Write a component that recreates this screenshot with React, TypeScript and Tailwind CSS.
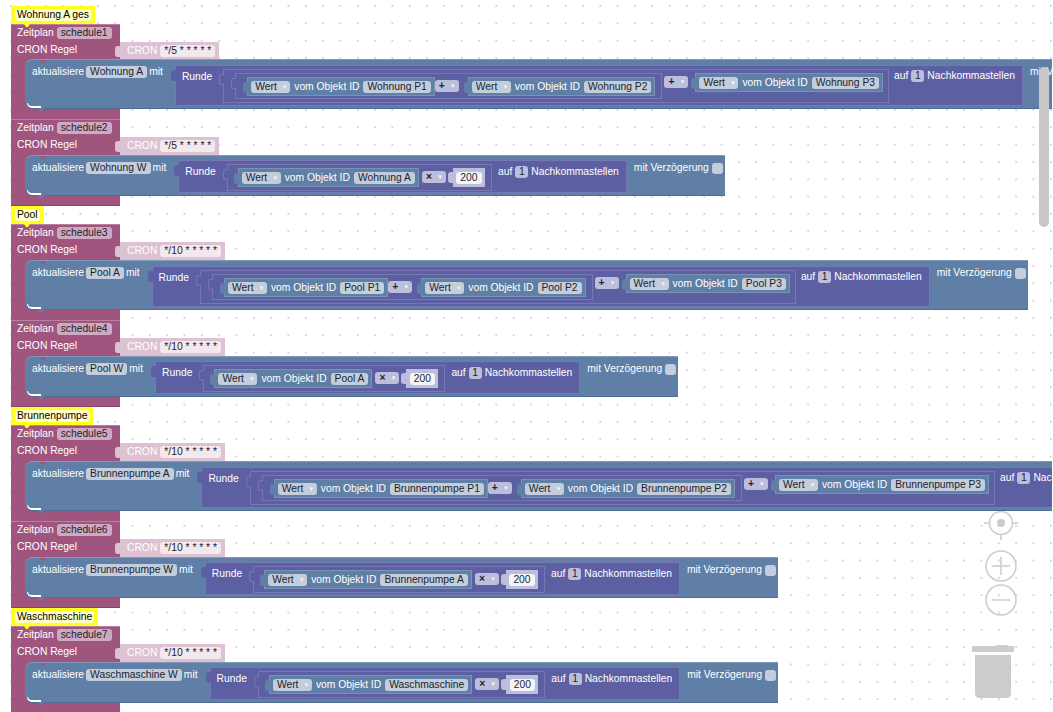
import type { ReactNode } from "react";

const schedules = [
  { comment: "Wohnung A ges", name: "schedule1", cron: "*/5 * * * * *", target: "Wohnung A", ids: ["Wohnung P1", "Wohnung P2", "Wohnung P3"] },
  { name: "schedule2", cron: "*/5 * * * * *", target: "Wohnung W", id: "Wohnung A" },
  { comment: "Pool", name: "schedule3", cron: "*/10 * * * * *", target: "Pool A", ids: ["Pool P1", "Pool P2", "Pool P3"] },
  { name: "schedule4", cron: "*/10 * * * * *", target: "Pool W", id: "Pool A" },
  { comment: "Brunnenpumpe", name: "schedule5", cron: "*/10 * * * * *", target: "Brunnenpumpe A", ids: ["Brunnenpumpe P1", "Brunnenpumpe P2", "Brunnenpumpe P3"] },
  { name: "schedule6", cron: "*/10 * * * * *", target: "Brunnenpumpe W", id: "Brunnenpumpe A" },
  { comment: "Waschmaschine", name: "schedule7", cron: "*/10 * * * * *", target: "Waschmaschine W", id: "Waschmaschine" },
];

function Field({ children, className }: { children: ReactNode; className: string }) {
  return (
    <span className={`flex h-[12px] shrink-0 items-center whitespace-nowrap rounded-[3px] px-[4px] text-[#20242c] ${className}`}>
      {children}
    </span>
  );
}

function Drop({ label, className }: { label: string; className: string }) {
  return (
    <Field className={className}>
      {label}
      <span className="ml-[5px] text-[6px] text-[#f2f4f8]">▼</span>
    </Field>
  );
}

function Tab({ className }: { className: string }) {
  return <span className={`absolute -left-[5px] top-[4px] h-[11px] w-[5px] rounded-l-[3px] ${className}`} />;
}

function Wert({ id }: { id: string }) {
  return (
    <div className="relative flex h-[19px] shrink-0 items-center gap-[4px] border border-[#7893b4] bg-[#5f7fa6] pl-[3px] pr-[3px] text-white">
      <Tab className="bg-[#5f7fa6]" />
      <Drop label="Wert" className="w-[39px] justify-between bg-[#c3cddc]" />
      <span className="whitespace-nowrap">vom Objekt ID</span>
      <Field className="bg-[#c3cddc]">{id}</Field>
    </div>
  );
}

function Plus({ label }: { label: string }) {
  return <Drop label={label} className="w-[24px] justify-between bg-[#bdbedb] font-bold" />;
}

function Sum({ ids }: { ids: string[] }) {
  return (
    <div className="relative ml-[11px] mt-[3px] flex h-[34px] shrink-0 items-start border border-[#7678b3] bg-[#5d5fa3] pl-[11px] pr-[5px] pt-[3px]">
      <Tab className="border border-r-0 border-[#7678b3] bg-[#5d5fa3]" />
      <div className="relative flex h-[26px] shrink-0 items-start border border-[#7678b3] bg-[#5d5fa3] pl-[11px] pr-[6px] pt-[3px]">
        <Tab className="border border-r-0 border-[#7678b3] bg-[#5d5fa3]" />
        <Wert id={ids[0]} />
        <div className="mr-[9px] mt-[3px]">
          <Plus label="+" />
        </div>
        <Wert id={ids[1]} />
      </div>
      <div className="ml-[2px] mr-[7px] mt-[3px]">
        <Plus label="+" />
      </div>
      <Wert id={ids[2]} />
    </div>
  );
}

function Product({ id }: { id: string }) {
  return (
    <div className="relative ml-[11px] mt-[3px] flex h-[27px] shrink-0 items-start border border-[#7678b3] bg-[#5d5fa3] pl-[10px] pr-[6px] pt-[3px]">
      <Tab className="border border-r-0 border-[#7678b3] bg-[#5d5fa3]" />
      <Wert id={id} />
      <div className="ml-[3px] mr-[7px] mt-[3px]">
        <Plus label="×" />
      </div>
      <div className="relative flex h-[19px] w-[32px] items-center justify-center bg-[#bdbedb]">
        <Tab className="bg-[#bdbedb]" />
        <Field className="bg-[#f4f4fa]">200</Field>
      </div>
    </div>
  );
}

function Notch({ className }: { className: string }) {
  return (
    <svg className={`absolute h-[3px] w-[12px] ${className}`} viewBox="0 0 12 3">
      <path d="M0 0 L3 0 L5 3 L7 3 L9 0 L12 0 Z" fill="currentColor" />
    </svg>
  );
}

function Schedule({ comment, name, cron, target, ids, id, first }: { comment?: string; name: string; cron: string; target: string; ids?: string[]; id?: string; first?: boolean }) {
  const tall = !!ids;
  return (
    <div className="flex flex-col">
      {comment && (
        <div className="relative z-20 w-fit bg-[#ffff22] px-[4px] py-[3px]">
          <span className="block h-[12px] rounded-[3px] bg-[#ffffc8] px-[2px] text-black">{comment}</span>
          <Notch className="left-[10px] top-full text-[#ffff22]" />
        </div>
      )}
      <div className="relative h-[18px] w-[109px] border-t border-[#b97fa0] bg-[#a0557f] pl-[6px] pt-[2px]">
        <div className="flex items-center gap-[3px] text-white">
          <span>Zeitplan</span>
          <Field className="h-[11px] bg-[#cfa9c1]">{name}</Field>
        </div>
      </div>
      <div className={`flex items-stretch ${first ? "h-[17px]" : "h-[18px]"}`}>
        <div className="w-[109px] bg-[#a0557f] pl-[6px] pt-[2px] text-white">CRON Regel</div>
        <div className="relative flex items-center gap-[3px] bg-[#dcc2d2] pl-[7px] pr-[4px] text-white">
          <Tab className="top-[3px] bg-[#dcc2d2]" />
          <span>CRON</span>
          <Field className="h-[11px] bg-[#f3e8ee]">{cron}</Field>
        </div>
      </div>
      <div className="flex">
        <div className="w-[22px] shrink-0 bg-[#a0557f]" />
        <div className={`relative z-10 -ml-[8px] flex w-max items-start rounded-l-[8px] border-t border-b border-t-[#7f9abb] border-b-[#4e6d92] bg-[#5f7fa6] pl-[7px] text-white ${tall ? "h-[50px]" : "h-[41px]"}`}>
          <Notch className="left-[12px] top-0 text-[#a0557f]" />
          <Notch className="left-[10px] top-full text-[#5f7fa6]" />
          <span className="absolute bottom-0 left-[2px] h-[5px] w-[14px] rounded-bl-[6px] border-b-2 border-l border-white" />
          <div className="mt-[6px] flex shrink-0 items-center gap-[2px]">
            <span>aktualisiere</span>
            <Field className="bg-[#c3cddc]">{target}</Field>
            <span>mit</span>
          </div>
          <div className={`relative ml-[12px] flex shrink-0 items-start border border-[#7678b3] bg-[#5d5fa3] ${tall ? "mt-[5px] h-[41px]" : "mt-[4px] h-[33px]"}`}>
            <Tab className="bg-[#5d5fa3]" />
            <span className="ml-[6px] mt-[5px]">Runde</span>
            {ids ? <Sum ids={ids} /> : <Product id={id ?? ""} />}
            <div className={`mr-[7px] flex items-center gap-[3px] ${tall ? "ml-[5px] mt-[4px]" : "ml-[6px] mt-[5px]"}`}>
              <span>auf</span>
              <Field className="w-[13px] justify-center bg-[#bdbedb] px-0">1</Field>
              <span className="whitespace-nowrap">Nachkommastellen</span>
            </div>
          </div>
          <div className="ml-[7px] mr-[2px] mt-[6px] flex shrink-0 items-center gap-[3px]">
            <span className="whitespace-nowrap">mit Verzögerung</span>
            <span className="h-[11px] w-[11px] rounded-[3px] bg-[#c3cddc]" />
          </div>
        </div>
      </div>
      <div className={`h-[10px] w-[109px] bg-[#a0557f] ${tall ? "" : "border-b border-[#854468]"}`} />
    </div>
  );
}

function Controls() {
  return (
    <svg className="absolute left-[960px] top-[505px] h-[200px] w-[70px]" viewBox="0 0 70 200" fill="none" stroke="#cccccc" strokeWidth="1.5">
      <circle cx="41" cy="18" r="11.5" />
      <path d="M41 6V1M41 30v5M29 18h-5M53 18h5" />
      <circle cx="41" cy="18" r="4" fill="#cccccc" stroke="none" />
      <circle cx="41" cy="61" r="15" />
      <path d="M41 52v18M32 61h18" />
      <circle cx="41" cy="95" r="15" />
      <path d="M32 95h18" />
      <g fill="#cccccc" stroke="none">
        <path d="M34 143c1-2 2-3 4-3h8c2 0 3 1 4 3Z" />
        <rect x="12" y="141" width="42" height="6" />
        <path d="M15 150h36v39c0 2-2 4-4 4H19c-2 0-4-2-4-4Z" />
      </g>
    </svg>
  );
}

export default function App() {
  return (
    <div className="relative h-[712px] w-[1053px] overflow-hidden bg-white bg-[radial-gradient(circle,#d6d6d6_1px,transparent_1.2px)] bg-[size:17.33px_17.33px] bg-[position:2.5px_-2.67px] font-['Liberation_Sans',Arial,sans-serif] text-[10.3px] leading-[12px]">
      <div className="flex flex-col pl-[11px] pt-[6px]">
        {schedules.map((s, i) => (
          <Schedule key={s.name} {...s} first={i === 0} />
        ))}
      </div>
      <Controls />
      <div className="absolute left-[1039px] top-[67px] z-30 h-[160px] w-[10px] rounded-[5px] bg-[#c8c8c8]" />
      <div className="absolute right-0 top-0 z-30 h-full w-[1px] bg-white" />
    </div>
  );
}
